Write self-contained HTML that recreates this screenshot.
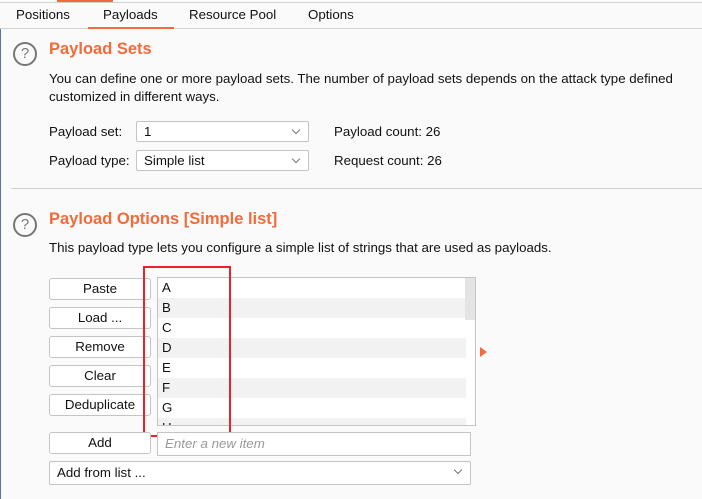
<!DOCTYPE html><html><head><style>
body{margin:0;width:702px;height:499px;background:#fafafa;font-family:"Liberation Sans",sans-serif;font-size:13.3px;color:#111;position:relative;overflow:hidden}
.a{position:absolute;white-space:nowrap}
.h{color:#f26b3a;font-weight:bold;font-size:16.5px}
.q{position:absolute;width:20px;height:20px;border:2px solid #777;border-radius:50%;color:#777;font-size:15px;text-align:center;line-height:20px}
.sel{position:absolute;background:#fff;border:1px solid #c4c4c4;border-radius:2px;height:21px;box-sizing:border-box;padding-left:7px;line-height:19px}
.sel:after{content:"";position:absolute;right:9px;top:5px;width:5px;height:5px;border-right:1px solid #777;border-bottom:1px solid #777;transform:rotate(45deg)}
.btn{position:absolute;left:49px;width:102px;height:22px;box-sizing:border-box;border:1px solid #c4c4c4;border-radius:3px;background:#fff;text-align:center;line-height:20px}
.row{height:20px;line-height:20px;padding-left:4px}
.row:nth-child(even){background:#f2f2f2}
</style></head><body>
<div class="a" style="left:0;top:2px;width:702px;height:1px;background:#cdd3cf"></div>
<div class="a" style="left:57px;top:0;width:56px;height:2px;background:#f26b3a"></div>
<div class="a" style="left:0;top:28px;width:702px;height:1px;background:#cdd3cf"></div>
<div class="a" style="left:0;top:29px;width:1px;height:470px;background:#5a7699"></div>
<div class="a" style="left:16px;top:7px">Positions</div>
<div class="a" style="left:103px;top:7px">Payloads</div>
<div class="a" style="left:88px;top:27px;width:86px;height:2px;background:#f26b3a"></div>
<div class="a" style="left:189px;top:7px">Resource Pool</div>
<div class="a" style="left:308px;top:7px">Options</div>
<div class="q" style="left:13px;top:42px">?</div>
<div class="a h" style="left:49px;top:40px">Payload Sets</div>
<div class="a" style="left:49px;top:71px">You can define one or more payload sets. The number of payload sets depends on the attack type defined</div>
<div class="a" style="left:49px;top:89px">customized in different ways.</div>
<div class="a" style="left:49px;top:124px">Payload set:</div>
<div class="sel" style="left:136px;top:121px;width:173px">1</div>
<div class="a" style="left:334px;top:124px">Payload count: 26</div>
<div class="a" style="left:49px;top:153px">Payload type:</div>
<div class="sel" style="left:136px;top:150px;width:173px">Simple list</div>
<div class="a" style="left:334px;top:153px">Request count: 26</div>
<div class="a" style="left:11px;top:188px;width:691px;height:1px;background:#d0d0d0"></div>
<div class="q" style="left:13px;top:213px">?</div>
<div class="a h" style="left:49px;top:210px">Payload Options [Simple list]</div>
<div class="a" style="left:49px;top:240px">This payload type lets you configure a simple list of strings that are used as payloads.</div>
<div class="btn" style="top:278px">Paste</div>
<div class="btn" style="top:307px">Load ...</div>
<div class="btn" style="top:336px">Remove</div>
<div class="btn" style="top:365px">Clear</div>
<div class="btn" style="top:394px">Deduplicate</div>
<div class="a" style="left:157px;top:277px;width:319px;height:149px;box-sizing:border-box;border:1px solid #c4c4c4;background:#fff;overflow:hidden">
<div style="width:308px"><div class="row">A</div><div class="row">B</div><div class="row">C</div><div class="row">D</div><div class="row">E</div><div class="row">F</div><div class="row">G</div><div class="row">H</div></div>
<div style="position:absolute;right:0;top:0;width:10px;height:42px;background:#e4e4e4"></div>
</div>
<div class="a" style="left:480px;top:347px;width:0;height:0;border-left:7px solid #f26b3a;border-top:5px solid transparent;border-bottom:5px solid transparent"></div>
<div class="a" style="left:143px;top:266px;width:84px;height:167px;border:2px solid #e8232b"></div>
<div class="btn" style="top:432px">Add</div>
<div class="a" style="left:157px;top:432px;width:314px;height:24px;box-sizing:border-box;border:1px solid #c4c4c4;background:#fff;padding-left:7px;line-height:22px;color:#999;font-style:italic">Enter a new item</div>
<div class="sel" style="left:49px;top:461px;width:422px;height:24px;line-height:22px">Add from list ...</div>
</body></html>
